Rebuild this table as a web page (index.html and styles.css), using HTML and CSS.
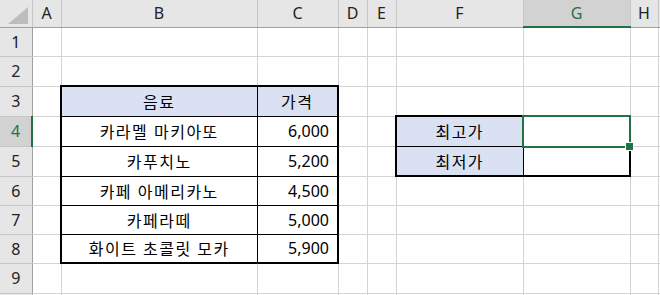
FILE: index.html
```html
<!DOCTYPE html>
<html lang="ko">
  <head>
    <meta charset="UTF-8" />
    <meta name="viewport" content="width=device-width, initial-scale=1.0" />
    <title>음료 가격</title>
    <link rel="stylesheet" href="styles.css">
  </head>
  <body>
    <table class="sheet">
      <colgroup>
        <col class="w-hdr" />
        <col class="w-narrow" />
        <col class="w-name" />
        <col class="w-price" />
        <col class="w-narrow" />
        <col class="w-narrow" />
        <col class="w-label" />
        <col class="w-value" />
        <col class="w-last" />
        <col class="w-rest" />
      </colgroup>
      <thead>
        <tr>
          <th class="corner">
            <svg width="20" height="17" viewBox="0 0 20 17"><polygon points="20,0 20,17 0,17" fill="#bdbdbd" /></svg>
          </th>
          <th>A</th>
          <th>B</th>
          <th>C</th>
          <th>D</th>
          <th>E</th>
          <th>F</th>
          <th class="active-col">G</th>
          <th>H</th>
          <th></th>
        </tr>
      </thead>
      <tbody>
        <tr>
          <th>1</th>
          <td></td><td></td><td></td><td></td><td></td><td></td><td></td><td></td><td></td>
        </tr>
        <tr>
          <th>2</th>
          <td></td><td></td><td></td><td></td><td></td><td></td><td></td><td></td><td></td>
        </tr>
        <tr>
          <th>3</th>
          <td></td>
          <td class="box fill txt top left">음료</td>
          <td class="box fill txt top right">가격</td>
          <td></td><td></td><td></td><td></td><td></td><td></td>
        </tr>
        <tr>
          <th class="active-row">4</th>
          <td></td>
          <td class="box txt left">카라멜 마키아또</td>
          <td class="box num right">6,000</td>
          <td></td><td></td>
          <td class="box fill txt top left">최고가</td>
          <td class="box top right selected"></td>
          <td></td><td></td>
        </tr>
        <tr>
          <th>5</th>
          <td></td>
          <td class="box txt left">카푸치노</td>
          <td class="box num right">5,200</td>
          <td></td><td></td>
          <td class="box fill txt bottom left">최저가</td>
          <td class="box bottom right"></td>
          <td></td><td></td>
        </tr>
        <tr>
          <th>6</th>
          <td></td>
          <td class="box txt left">카페 아메리카노</td>
          <td class="box num right">4,500</td>
          <td></td><td></td><td></td><td></td><td></td><td></td>
        </tr>
        <tr>
          <th>7</th>
          <td></td>
          <td class="box txt left">카페라떼</td>
          <td class="box num right">5,000</td>
          <td></td><td></td><td></td><td></td><td></td><td></td>
        </tr>
        <tr>
          <th>8</th>
          <td></td>
          <td class="box txt bottom left">화이트 초콜릿 모카</td>
          <td class="box num bottom right">5,900</td>
          <td></td><td></td><td></td><td></td><td></td><td></td>
        </tr>
        <tr>
          <th>9</th>
          <td></td><td></td><td></td><td></td><td></td><td></td><td></td><td></td><td></td>
        </tr>
        <!-- next row only peeks in at the bottom edge -->
        <tr class="peek">
          <th></th>
          <td></td><td></td><td></td><td></td><td></td><td></td><td></td><td></td><td></td>
        </tr>
      </tbody>
    </table>
  </body>
</html>
```

FILE: styles.css
```css
/* Global Styles */
* {
  margin: 0;
  padding: 0;
  box-sizing: border-box;
}
body {
  font-family: "Noto Sans", "Noto Sans CJK KR", sans-serif;
  background: #ffffff;
  color: #000000;
  overflow: hidden;
}

/* Worksheet grid */
.sheet {
  border-collapse: collapse;
  table-layout: fixed;
  width: 660px;
}

.w-hdr { width: 32px; }
.w-narrow { width: 29px; }
.w-name { width: 196px; }
.w-price { width: 81px; }
.w-label { width: 127px; }
.w-value { width: 107px; }
.w-last { width: 28px; }
.w-rest { width: 2px; }

.sheet tr { height: 30px; }
.sheet thead tr { height: 27px; }
.sheet tbody tr:nth-child(1),
.sheet tbody tr:nth-child(6),
.sheet tbody tr:nth-child(7),
.sheet tbody tr:nth-child(8) { height: 29px; }
.sheet tr.peek { height: 2px; }

.sheet td {
  border: 1px solid #d4d4d4;
  font-size: 16px;
  white-space: nowrap;
  overflow: hidden;
  padding: 0 8px;
  vertical-align: middle;
}

/* Column and row headers */
.sheet th {
  background: #e6e6e6;
  font-weight: normal;
  font-size: 16px;
  color: #222;
  border: 1px solid #c6c6c6;
  text-align: center;
  vertical-align: middle;
  padding: 0;
}
.sheet thead th {
  border-top: none;
  border-bottom: 1px solid #a0a0a0;
}
.sheet tbody th {
  border-left: none;
  border-right: 1px solid #a0a0a0;
}
.sheet th.corner {
  border-left: none;
  position: relative;
}
.corner svg {
  position: absolute;
  right: 4px;
  bottom: 3px;
}
.sheet th.active-col {
  background: #d2d2d2;
  color: #217346;
  border-bottom: 2px solid #217346;
}
.sheet th.active-row {
  background: #d2d2d2;
  color: #217346;
  border-right: 2px solid #217346;
}

/* Bordered ranges */
.sheet td.box { border: 1px solid #000; }
.sheet td.top { border-top: 2px solid #000; }
.sheet td.bottom { border-bottom: 2px solid #000; }
.sheet td.left { border-left: 2px solid #000; }
.sheet td.right { border-right: 2px solid #000; }

.fill { background: #d9e1f2; }
.txt {
  text-align: center;
  letter-spacing: 1.5px;
}
.num {
  text-align: right;
  font-size: 17px;
}

/* Active cell with fill handle */
.sheet td.selected {
  position: relative;
  overflow: visible;
}
.selected::before {
  content: "";
  position: absolute;
  left: -2px;
  top: -2px;
  right: -2px;
  bottom: -2px;
  border: 2px solid #217346;
}
.selected::after {
  content: "";
  position: absolute;
  right: -5px;
  bottom: -5px;
  width: 7px;
  height: 7px;
  background: #217346;
  border: 1px solid #fff;
}
```
